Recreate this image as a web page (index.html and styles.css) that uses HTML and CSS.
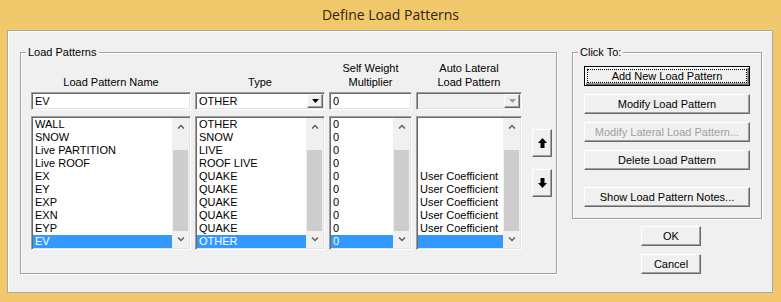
FILE: index.html
```html
<!DOCTYPE html>
<html>
<head>
    <meta charset="UTF-8">
    <title>Define Load Patterns</title>
    <link rel="stylesheet" href="styles.css">
</head>
<body>
    <div class="titlebar">Define Load Patterns</div>
    <div class="client">
        <div class="group patterns">
            <span class="legend">Load Patterns</span>

            <div class="col col-name">
                <div class="head">Load Pattern Name</div>
                <div class="field sunken">EV</div>
                <div class="list sunken">
                    <div class="rows">
                        <div class="row">WALL</div>
                        <div class="row">SNOW</div>
                        <div class="row">Live PARTITION</div>
                        <div class="row">Live ROOF</div>
                        <div class="row">EX</div>
                        <div class="row">EY</div>
                        <div class="row">EXP</div>
                        <div class="row">EXN</div>
                        <div class="row">EYP</div>
                        <div class="row sel">EV</div>
                    </div>
                    <div class="vscroll">
                        <div class="sb-btn"><svg width="8" height="5" viewBox="0 0 8 5"><polyline points="1,4.5 4,1.5 7,4.5" /></svg></div>
                        <div class="sb-track"><div class="sb-thumb"></div></div>
                        <div class="sb-btn"><svg width="8" height="5" viewBox="0 0 8 5"><polyline points="1,0.5 4,3.5 7,0.5" /></svg></div>
                    </div>
                </div>
            </div>

            <div class="col col-type">
                <div class="head">Type</div>
                <div class="field sunken combo">
                    <span class="value">OTHER</span>
                    <span class="drop"><svg width="7" height="4" viewBox="0 0 7 4"><path d="M0 0H7L3.5 4Z" /></svg></span>
                </div>
                <div class="list sunken">
                    <div class="rows">
                        <div class="row">OTHER</div>
                        <div class="row">SNOW</div>
                        <div class="row">LIVE</div>
                        <div class="row">ROOF LIVE</div>
                        <div class="row">QUAKE</div>
                        <div class="row">QUAKE</div>
                        <div class="row">QUAKE</div>
                        <div class="row">QUAKE</div>
                        <div class="row">QUAKE</div>
                        <div class="row sel">OTHER</div>
                    </div>
                    <div class="vscroll">
                        <div class="sb-btn"><svg width="8" height="5" viewBox="0 0 8 5"><polyline points="1,4.5 4,1.5 7,4.5" /></svg></div>
                        <div class="sb-track"><div class="sb-thumb"></div></div>
                        <div class="sb-btn"><svg width="8" height="5" viewBox="0 0 8 5"><polyline points="1,0.5 4,3.5 7,0.5" /></svg></div>
                    </div>
                </div>
            </div>

            <div class="col col-sw">
                <div class="head">Self Weight<br>Multiplier</div>
                <div class="field sunken">0</div>
                <div class="list sunken">
                    <div class="rows">
                        <div class="row">0</div>
                        <div class="row">0</div>
                        <div class="row">0</div>
                        <div class="row">0</div>
                        <div class="row">0</div>
                        <div class="row">0</div>
                        <div class="row">0</div>
                        <div class="row">0</div>
                        <div class="row">0</div>
                        <div class="row sel">0</div>
                    </div>
                    <div class="vscroll">
                        <div class="sb-btn"><svg width="8" height="5" viewBox="0 0 8 5"><polyline points="1,4.5 4,1.5 7,4.5" /></svg></div>
                        <div class="sb-track"><div class="sb-thumb"></div></div>
                        <div class="sb-btn"><svg width="8" height="5" viewBox="0 0 8 5"><polyline points="1,0.5 4,3.5 7,0.5" /></svg></div>
                    </div>
                </div>
            </div>

            <div class="col col-auto">
                <div class="head">Auto Lateral<br>Load Pattern</div>
                <div class="field sunken combo disabled">
                    <span class="value"></span>
                    <span class="drop"><svg width="7" height="4" viewBox="0 0 7 4"><path d="M0 0H7L3.5 4Z" /></svg></span>
                </div>
                <div class="list sunken">
                    <div class="rows">
                        <div class="row"></div>
                        <div class="row"></div>
                        <div class="row"></div>
                        <div class="row"></div>
                        <div class="row">User Coefficient</div>
                        <div class="row">User Coefficient</div>
                        <div class="row">User Coefficient</div>
                        <div class="row">User Coefficient</div>
                        <div class="row">User Coefficient</div>
                        <div class="row sel"></div>
                    </div>
                    <div class="vscroll">
                        <div class="sb-btn"><svg width="8" height="5" viewBox="0 0 8 5"><polyline points="1,4.5 4,1.5 7,4.5" /></svg></div>
                        <div class="sb-track"><div class="sb-thumb"></div></div>
                        <div class="sb-btn"><svg width="8" height="5" viewBox="0 0 8 5"><polyline points="1,0.5 4,3.5 7,0.5" /></svg></div>
                    </div>
                </div>
            </div>

            <div class="movers">
                <div class="btn mover"><svg width="9" height="10" viewBox="0 0 9 10"><path d="M4.5 0L9 5H6.5V10H2.5V5H0Z" /></svg></div>
                <div class="btn mover"><svg width="9" height="10" viewBox="0 0 9 10"><path d="M4.5 10L9 5H6.5V0H2.5V5H0Z" /></svg></div>
            </div>
        </div>

        <div class="side">
            <div class="group clickto">
                <span class="legend">Click To:</span>
                <div class="btn default"><span class="focus">Add New Load Pattern</span></div>
                <div class="btn">Modify Load Pattern</div>
                <div class="btn disabled">Modify Lateral Load Pattern...</div>
                <div class="btn">Delete Load Pattern</div>
                <div class="btn notes">Show Load Pattern Notes...</div>
            </div>
            <div class="dlg-buttons">
                <div class="btn">OK</div>
                <div class="btn">Cancel</div>
            </div>
        </div>
    </div>
</body>
</html>
```

FILE: styles.css
```css
* {
    box-sizing: border-box;
}

body {
    margin: 0;
    width: 781px;
    height: 302px;
    overflow: hidden;
    background: #f1c86b;
    font-family: "Liberation Sans", Arial, sans-serif;
    font-size: 11px;
    color: #000;
}

.titlebar {
    height: 30px;
    line-height: 30px;
    text-align: center;
    font-family: "Open Sans", "Liberation Sans", sans-serif;
    font-size: 14px;
    color: #30260f;
}

.client {
    margin: 0 8px 0 7px;
    height: 263px;
    background: #f0f0f0;
    border: 1px solid #a9a9a9;
    box-shadow: inset 1px 1px 0 #fff;
    display: flex;
    align-items: flex-start;
    gap: 15px;
    padding: 21px 10px 0 12px;
}

/* group boxes */
.group {
    position: relative;
    border: 1px solid #a0a0a0;
    box-shadow: 1px 1px 0 #fff, inset 1px 1px 0 #fff;
}
.legend {
    position: absolute;
    top: -7px;
    left: 5px;
    padding: 0 2px;
    line-height: 13px;
    background: #f0f0f0;
}

.patterns {
    width: 537px;
    height: 222px;
    padding: 8px 0 0 10px;
    display: flex;
}

.col {
    display: flex;
    flex-direction: column;
    margin-right: 4px;
}
.col-name { width: 160px; }
.col-type { width: 130px; }
.col-sw { width: 83px; }
.col-auto { width: 106px; margin-right: 10px; }

.head {
    height: 28px;
    display: flex;
    align-items: flex-end;
    justify-content: center;
    text-align: center;
    line-height: 14px;
    margin-bottom: 3px;
}

/* sunken 3d edge used by edits and lists */
.sunken {
    background: #fff;
    border: 1px solid;
    border-color: #a0a0a0 #fff #fff #a0a0a0;
    box-shadow: inset 1px 1px 0 #696969, inset -1px -1px 0 #e3e3e3;
}

.field {
    height: 18px;
    padding: 1px 1px 1px 3px;
    line-height: 14px;
    margin-bottom: 6px;
    white-space: nowrap;
}
.combo {
    display: flex;
    padding-right: 1px;
}
.combo .value {
    flex: 1;
}
.combo.disabled {
    background: #f0f0f0;
}
.drop {
    width: 16px;
    height: 14px;
    background: #f0f0f0;
    border: 1px solid;
    border-color: #fff #696969 #696969 #fff;
    box-shadow: inset -1px -1px 0 #a0a0a0;
    display: flex;
    align-items: center;
    justify-content: center;
}
.drop path { fill: #000; }
.disabled .drop path { fill: #a0a0a0; }

.list {
    height: 134px;
    padding: 1px;
    display: flex;
}
.rows {
    flex: 1;
    overflow: hidden;
}
.row {
    height: 13px;
    line-height: 13px;
    padding-left: 2px;
    white-space: nowrap;
}
.row.sel {
    background: #3399ff;
    color: #fff;
}

.vscroll {
    width: 17px;
    background: #f0f0f0;
    display: flex;
    flex-direction: column;
}
.sb-btn {
    height: 17px;
    display: flex;
    align-items: center;
    justify-content: center;
}
.sb-btn polyline {
    fill: none;
    stroke: #606060;
    stroke-width: 1.5;
}
.sb-track {
    flex: 1;
    padding: 15px 1px 0;
    display: flex;
}
.sb-thumb {
    flex: 1;
    background: #cdcdcd;
}

/* raised buttons */
.btn {
    height: 20px;
    line-height: 18px;
    text-align: center;
    white-space: nowrap;
    background: #f0f0f0;
    border: 1px solid;
    border-color: #fff #696969 #696969 #fff;
    box-shadow: inset -1px -1px 0 #a0a0a0;
}
.btn.disabled {
    color: #a0a0a0;
}
.btn.default {
    border-color: #000;
    box-shadow: inset 1px 1px 0 #fff, inset -1px -1px 0 #696969, inset -2px -2px 0 #a0a0a0;
    padding: 2px;
}
.focus {
    display: block;
    height: 14px;
    line-height: 12px;
    border: 1px dotted #000;
}

.movers {
    display: flex;
    flex-direction: column;
    gap: 12px;
    padding-top: 68px;
}
.mover {
    width: 20px;
    height: 28px;
    display: flex;
    align-items: center;
    justify-content: center;
}
.mover path { fill: #000; }

.side {
    display: flex;
    flex-direction: column;
}
.clickto {
    width: 190px;
    height: 167px;
    padding: 13px 11px 0;
    display: flex;
    flex-direction: column;
    gap: 8px;
}
.notes {
    margin-top: 9px;
}
.dlg-buttons {
    padding: 7px 0 0 69px;
    display: flex;
    flex-direction: column;
    gap: 8px;
}
.dlg-buttons .btn {
    width: 60px;
}
```
